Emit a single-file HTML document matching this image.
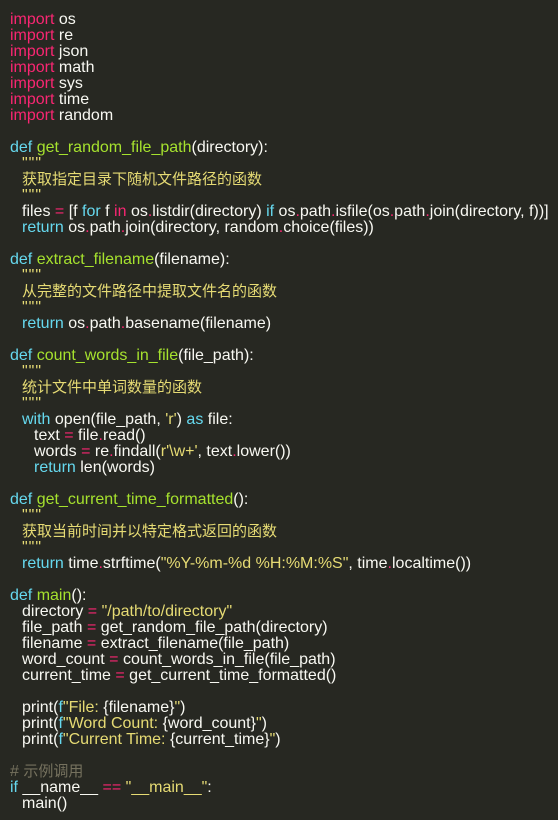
<!DOCTYPE html>
<html><head><meta charset="utf-8"><style>
html,body{margin:0;padding:0;background:#272822;}
body{width:558px;height:820px;overflow:hidden;font-family:"Liberation Sans","Noto Sans CJK SC",sans-serif;font-size:16px;color:#f8f8f2;}
.c{padding-top:12px;}
.l{height:16px;line-height:16px;white-space:pre;padding-left:10px;}
.i1{padding-left:22px}.i2{padding-left:34px}
.k{color:#f92672}.d{color:#66d9ef}.f{color:#a6e22e}.s{color:#e6db74}.m{color:#75715e}
.z{font-size:15px}
.q{letter-spacing:1px}
</style></head><body><div class="c">
<div class="l"><span class="k">import</span> os</div>
<div class="l"><span class="k">import</span> re</div>
<div class="l"><span class="k">import</span> json</div>
<div class="l"><span class="k">import</span> math</div>
<div class="l"><span class="k">import</span> sys</div>
<div class="l"><span class="k">import</span> time</div>
<div class="l"><span class="k">import</span> random</div>
<div class="l"> </div>
<div class="l"><span class="d">def</span> <span class="f">get_random_file_path</span>(directory):</div>
<div class="l i1 s q">"""</div>
<div class="l i1 s z">获取指定目录下随机文件路径的函数</div>
<div class="l i1 s q">"""</div>
<div class="l i1">files <span class="k">=</span> [f <span class="d">for</span> f <span class="k">in</span> os<span class="k">.</span>listdir(directory) <span class="d">if</span> os<span class="k">.</span>path<span class="k">.</span>isfile(os<span class="k">.</span>path<span class="k">.</span>join(directory, f))]</div>
<div class="l i1"><span class="d">return</span> os<span class="k">.</span>path<span class="k">.</span>join(directory, random<span class="k">.</span>choice(files))</div>
<div class="l"> </div>
<div class="l"><span class="d">def</span> <span class="f">extract_filename</span>(filename):</div>
<div class="l i1 s q">"""</div>
<div class="l i1 s z">从完整的文件路径中提取文件名的函数</div>
<div class="l i1 s q">"""</div>
<div class="l i1"><span class="d">return</span> os<span class="k">.</span>path<span class="k">.</span>basename(filename)</div>
<div class="l"> </div>
<div class="l"><span class="d">def</span> <span class="f">count_words_in_file</span>(file_path):</div>
<div class="l i1 s q">"""</div>
<div class="l i1 s z">统计文件中单词数量的函数</div>
<div class="l i1 s q">"""</div>
<div class="l i1"><span class="d">with</span> open(file_path, <span class="s">'r'</span>) <span class="d">as</span> file:</div>
<div class="l i2">text <span class="k">=</span> file<span class="k">.</span>read()</div>
<div class="l i2">words <span class="k">=</span> re<span class="k">.</span>findall(<span class="s">r'\w+'</span>, text<span class="k">.</span>lower())</div>
<div class="l i2"><span class="d">return</span> len(words)</div>
<div class="l"> </div>
<div class="l"><span class="d">def</span> <span class="f">get_current_time_formatted</span>():</div>
<div class="l i1 s q">"""</div>
<div class="l i1 s z">获取当前时间并以特定格式返回的函数</div>
<div class="l i1 s q">"""</div>
<div class="l i1"><span class="d">return</span> time<span class="k">.</span>strftime(<span class="s">"%Y-%m-%d %H:%M:%S"</span>, time<span class="k">.</span>localtime())</div>
<div class="l"> </div>
<div class="l"><span class="d">def</span> <span class="f">main</span>():</div>
<div class="l i1">directory <span class="k">=</span> <span class="s">"/path/to/directory"</span></div>
<div class="l i1">file_path <span class="k">=</span> get_random_file_path(directory)</div>
<div class="l i1">filename <span class="k">=</span> extract_filename(file_path)</div>
<div class="l i1">word_count <span class="k">=</span> count_words_in_file(file_path)</div>
<div class="l i1">current_time <span class="k">=</span> get_current_time_formatted()</div>
<div class="l"> </div>
<div class="l i1">print(<span class="d">f</span><span class="s">"File: </span>{filename}<span class="s">"</span>)</div>
<div class="l i1">print(<span class="d">f</span><span class="s">"Word Count: </span>{word_count}<span class="s">"</span>)</div>
<div class="l i1">print(<span class="d">f</span><span class="s">"Current Time: </span>{current_time}<span class="s">"</span>)</div>
<div class="l"> </div>
<div class="l m"># <span class="z">示例调用</span></div>
<div class="l"><span class="d">if</span> __name__ <span class="k">==</span> <span class="s">"__main__"</span>:</div>
<div class="l i1">main()</div>
</div></body></html>
